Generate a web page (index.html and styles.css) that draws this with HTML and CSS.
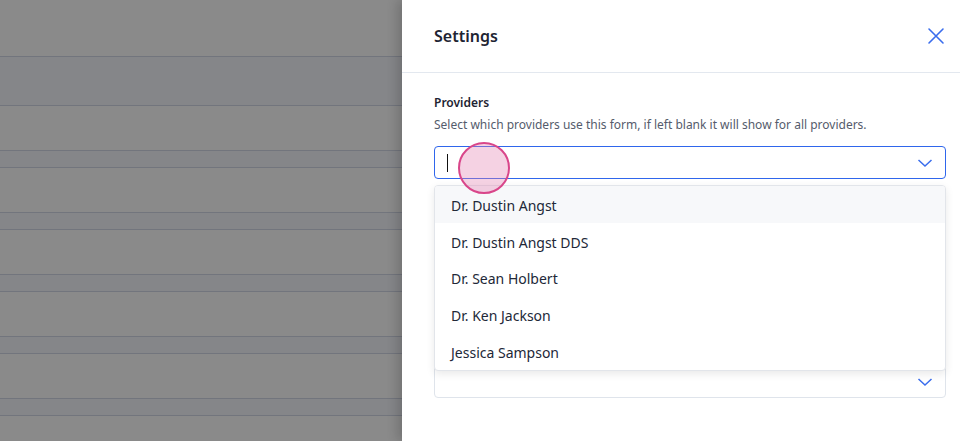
FILE: index.html
```html
<!DOCTYPE html>
<html lang="en">
<head>
<meta charset="utf-8">
<title>Settings</title>
<link rel="stylesheet" href="styles.css">
</head>
<body>
<div class="backdrop">
  <div class="bd-header"></div>
  <div class="bd-list">
    <div class="bd-card"></div>
    <div class="bd-card"></div>
    <div class="bd-card"></div>
    <div class="bd-card"></div>
    <div class="bd-card"></div>
    <div class="bd-card"></div>
  </div>
</div>
<aside class="panel">
  <header class="panel-header">
    <h2 class="panel-title">Settings</h2>
    <button class="close-btn" aria-label="Close">
      <svg width="18" height="18" viewBox="0 0 18 18"><path d="M2 2 L16 16 M16 2 L2 16" stroke="#3a6ded" stroke-width="1.6" fill="none" stroke-linecap="round"/></svg>
    </button>
  </header>
  <div class="panel-body">
    <div class="field">
      <div class="field-label">Providers</div>
      <div class="field-desc">Select which providers use this form, if left blank it will show for all providers.</div>
      <div class="select-wrap">
        <div class="select is-focused">
          <span class="caret"></span>
          <svg class="chev" width="16" height="10" viewBox="0 0 16 10"><path d="M1.5 2 L8 8 L14.5 2" stroke="#3a6ded" stroke-width="1.5" fill="none"/></svg>
        </div>
        <ul class="menu">
          <li class="menu-item is-active">Dr. Dustin Angst</li>
          <li class="menu-item">Dr. Dustin Angst DDS</li>
          <li class="menu-item">Dr. Sean Holbert</li>
          <li class="menu-item">Dr. Ken Jackson</li>
          <li class="menu-item">Jessica Sampson</li>
        </ul>
        <span class="touch"></span>
      </div>
    </div>
    <div class="field field-2">
      <div class="select">
        <svg class="chev" width="16" height="10" viewBox="0 0 16 10"><path d="M1.5 2 L8 8 L14.5 2" stroke="#3a6ded" stroke-width="1.5" fill="none"/></svg>
      </div>
    </div>
    <div class="field field-3">
      <div class="select">
        <svg class="chev" width="16" height="10" viewBox="0 0 16 10"><path d="M1.5 2 L8 8 L14.5 2" stroke="#3a6ded" stroke-width="1.5" fill="none"/></svg>
      </div>
    </div>
  </div>
</aside>
</body>
</html>
```
FILE: styles.css
```css
* { box-sizing: border-box; }
html, body { margin: 0; padding: 0; }
body {
  width: 960px;
  height: 441px;
  overflow: hidden;
  display: flex;
  font-family: "Noto Sans", "Open Sans", sans-serif;
  color: #1e2433;
}

/* dimmed page behind the drawer */
.backdrop {
  width: 402px;
  flex: none;
  background: #858689;
  overflow: hidden;
}
.bd-header {
  height: 57px;
  background: #8a8a8a;
  border-bottom: 1px solid #72757d;
}
.bd-list {
  padding-top: 48px;
  display: flex;
  flex-direction: column;
  gap: 16px;
}
.bd-card {
  height: 46px;
  background: #8a8a8a;
  border-top: 1px solid #72757d;
  border-bottom: 1px solid #72757d;
  flex: none;
}

/* drawer */
.panel {
  flex: 1;
  background: #fff;
  box-shadow: -5px 0 10px rgba(0, 0, 0, 0.16);
  position: relative;
  z-index: 1;
}
.panel-header {
  height: 73px;
  border-bottom: 1px solid #e3e8ef;
  display: flex;
  align-items: center;
  justify-content: space-between;
  padding: 0 15px 0 32px;
}
.panel-title {
  margin: 0;
  font-size: 16px;
  font-weight: 600;
  color: #1e2433;
}
.close-btn {
  border: 0;
  background: none;
  padding: 0;
  width: 18px;
  height: 18px;
  display: flex;
}

.panel-body {
  padding: 21px 14px 0 32px;
}
.field-label {
  font-size: 12px;
  line-height: 18px;
  font-weight: 600;
  color: #1e2433;
}
.field-desc {
  margin-top: 4px;
  font-size: 12px;
  line-height: 18px;
  color: #555c6c;
}
.select-wrap {
  position: relative;
  margin-top: 12px;
}
.select {
  height: 33px;
  border: 1px solid #dfe4eb;
  border-radius: 4px;
  display: flex;
  align-items: center;
  justify-content: space-between;
  padding: 0 12px 0 12px;
  background: #fff;
}
.select .chev { margin-left: auto; }
.select.is-focused {
  border-color: #2f66ec;
}
.caret {
  width: 1px;
  height: 18px;
  background: #111;
}

.menu {
  position: absolute;
  left: 0;
  right: 0;
  top: 39px;
  margin: 0;
  padding: 0;
  list-style: none;
  background: #fff;
  border: 1px solid #e2e5ea;
  border-radius: 4px;
  box-shadow: 0 3px 8px rgba(0, 0, 0, 0.09);
  z-index: 2;
  overflow: hidden;
}
.menu-item {
  height: 36.8px;
  display: flex;
  align-items: center;
  padding: 2px 0 0 16px;
  font-size: 14px;
  color: #222838;
}
.menu-item.is-active {
  background: #f7f8fa;
}

.touch {
  position: absolute;
  left: 24px;
  top: -4px;
  width: 52px;
  height: 52px;
  border-radius: 50%;
  border: 2px solid #d9468a;
  background: rgba(228, 130, 178, 0.36);
  z-index: 3;
}

.field-2 { margin-top: 74px; }
.field-2 .select { height: 35px; }
.field-3 { margin-top: 77px; }
.field-3 .select { height: 33px; }
```
